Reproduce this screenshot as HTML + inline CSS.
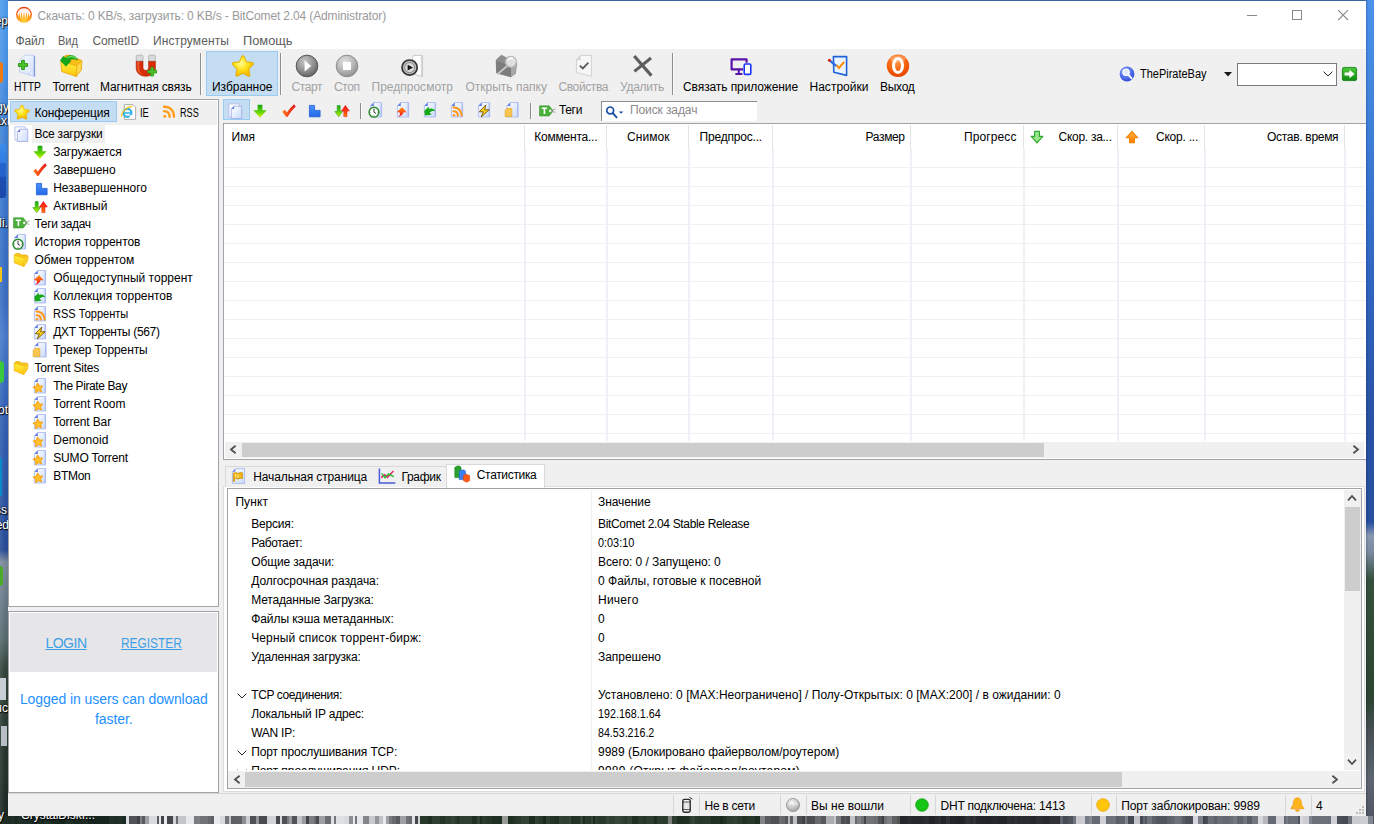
<!DOCTYPE html>
<html lang="ru"><head><meta charset="utf-8"><title>BitComet</title>
<style>
html,body{margin:0;padding:0}
body{width:1374px;height:824px;overflow:hidden;position:relative;background:#2a57a6;font-family:"Liberation Sans",sans-serif;font-size:12px;color:#000}
.a{position:absolute}
#desk-l{left:0;top:0;width:8px;height:824px;background:linear-gradient(90deg,rgba(255,255,255,.10) 0,rgba(0,0,0,0) 60%,rgba(0,0,20,.06) 100%),linear-gradient(180deg,#4e9cee 0,#4a94e6 60px,#4082d4 140px,#3872c8 230px,#3c6ec2 300px,#4a7acb 335px,#3464b8 400px,#2c57a6 480px,#284c96 550px,#7c8a9a 562px,#6a7a8a 600px,#566a6a 640px,#33443a 670px,#2c3c32 720px,#26332c 770px,#1c2824 824px)}
#desk-r{left:1366px;top:0;width:8px;height:824px;background:linear-gradient(90deg,rgba(0,0,30,.18) 0,rgba(0,0,0,0) 30%),linear-gradient(180deg,#4c92ea 0,#4184dc 100px,#3168c4 260px,#2852a4 420px,#26509e 522px,#8a98b0 536px,#7a8aa0 552px,#34503c 580px,#2c4432 700px,#4a5258 735px,#5c6470 780px,#4e5460 824px)}
#desk-b{left:0;top:816px;width:1374px;height:8px;background:linear-gradient(90deg,#22302a 0px,#22302a 4px,#1f2d27 4px,#1f2d27 8px,#1e2c26 8px,#1e2c26 11px,#22302a 11px,#22302a 15px,#1a2822 15px,#1a2822 18px,#22302a 18px,#22302a 21px,#1f2d27 21px,#1f2d27 27px,#202e28 27px,#202e28 31px,#182620 31px,#182620 37px,#1e2c26 37px,#1e2c26 42px,#192721 42px,#192721 44px,#22302a 44px,#22302a 47px,#1f2d27 47px,#1f2d27 51px,#192721 51px,#192721 59px,#16241e 59px,#16241e 65px,#202e28 65px,#202e28 71px,#1e2c26 71px,#1e2c26 74px,#1a2822 74px,#1a2822 82px,#1e2c26 82px,#1e2c26 85px,#1f2d27 85px,#1f2d27 88px,#17251f 88px,#17251f 96px,#17251f 96px,#17251f 104px,#16241e 104px,#16241e 106px,#16241e 106px,#16241e 109px,#212f29 109px,#212f29 113px,#1f2d27 113px,#1f2d27 117px,#202e28 117px,#202e28 123px,#1a2822 123px,#1a2822 126px,#dadde0 126px,#dadde0 129px,#4f5357 129px,#4f5357 137px,#3f4347 137px,#3f4347 140px,#7c8084 140px,#7c8084 142px,#565a5e 142px,#565a5e 145px,#9b9fa3 145px,#9b9fa3 149px,#d8dbde 149px,#d8dbde 157px,#595d61 157px,#595d61 159px,#e5e8eb 159px,#e5e8eb 161px,#404448 161px,#404448 164px,#e6e9ec 164px,#e6e9ec 167px,#43474b 167px,#43474b 173px,#d0d3d6 173px,#d0d3d6 176px,#686c70 176px,#686c70 178px,#c4c7ca 178px,#c4c7ca 186px,#e5e8eb 186px,#e5e8eb 188px,#e6e9ec 188px,#e6e9ec 194px,#787c80 194px,#787c80 197px,#7b7f83 197px,#7b7f83 200px,#6f7377 200px,#6f7377 208px,#65696d 208px,#65696d 211px,#5d6165 211px,#5d6165 214px,#e8ebee 214px,#e8ebee 220px,#d8dbde 220px,#d8dbde 225px,#73777b 225px,#73777b 229px,#c2c5c8 229px,#c2c5c8 231px,#5c6064 231px,#5c6064 236px,#5e6266 236px,#5e6266 242px,#8a8e92 242px,#8a8e92 246px,#cbced1 246px,#cbced1 250px,#4e5256 250px,#4e5256 256px,#919599 256px,#919599 259px,#474b4f 259px,#474b4f 267px,#cdd0d3 267px,#cdd0d3 270px,#d1d4d7 270px,#d1d4d7 276px,#45494d 276px,#45494d 280px,#d7dadd 280px,#d7dadd 282px,#4e5256 282px,#4e5256 287px,#777b7f 287px,#777b7f 289px,#969a9e 289px,#969a9e 292px,#4f5357 292px,#4f5357 297px,#c1c4c7 297px,#c1c4c7 302px,#979b9f 302px,#979b9f 306px,#404448 306px,#404448 309px,#7b7f83 309px,#7b7f83 314px,#666a6e 314px,#666a6e 316px,#474b4f 316px,#474b4f 319px,#9ca0a4 319px,#9ca0a4 323px,#9ca0a4 323px,#9ca0a4 325px,#696d71 325px,#696d71 331px,#dee1e4 331px,#dee1e4 334px,#73777b 334px,#73777b 336px,#dfe2e5 336px,#dfe2e5 344px,#d8dbde 344px,#d8dbde 349px,#8b8f93 349px,#8b8f93 353px,#e8ebee 353px,#e8ebee 355px,#73777b 355px,#73777b 357px,#e5e8eb 357px,#e5e8eb 363px,#83878b 363px,#83878b 367px,#7f8387 367px,#7f8387 369px,#c5c8cb 369px,#c5c8cb 371px,#c7cacd 371px,#c7cacd 375px,#92969a 375px,#92969a 379px,#c0c3c6 379px,#c0c3c6 383px,#e7eaed 383px,#e7eaed 386px,#9ea2a6 386px,#9ea2a6 389px,#767a7e 389px,#767a7e 392px,#676b6f 392px,#676b6f 396px,#575b5f 396px,#575b5f 400px,#9ea2a6 400px,#9ea2a6 406px,#6f7377 406px,#6f7377 409px,#666a6e 409px,#666a6e 412px,#dfe2e5 412px,#dfe2e5 415px,#43474b 415px,#43474b 418px,#d1d4d7 418px,#d1d4d7 420px,#28382a 420px,#28382a 428px,#203022 428px,#203022 432px,#2e3e30 432px,#2e3e30 440px,#243426 440px,#243426 445px,#2d3d2f 445px,#2d3d2f 451px,#344436 451px,#344436 455px,#2d3d2f 455px,#2d3d2f 457px,#223224 457px,#223224 459px,#2e3e30 459px,#2e3e30 464px,#2e3e30 464px,#2e3e30 472px,#203022 472px,#203022 475px,#223224 475px,#223224 477px,#334335 477px,#334335 480px,#1d2d1f 480px,#1d2d1f 482px,#2b3b2d 482px,#2b3b2d 486px,#253527 486px,#253527 492px,#203022 492px,#203022 494px,#1f2f21 494px,#1f2f21 502px,#969b96 502px,#969b96 508px,#1f2f21 508px,#1f2f21 513px,#253527 513px,#253527 516px,#2a3a2c 516px,#2a3a2c 521px,#324234 521px,#324234 526px,#334335 526px,#334335 529px,#1c2c1e 529px,#1c2c1e 535px,#314133 535px,#314133 539px,#28382a 539px,#28382a 543px,#1a2a1c 543px,#1a2a1c 546px,#2e3e30 546px,#2e3e30 550px,#243426 550px,#243426 555px,#203022 555px,#203022 559px,#344436 559px,#344436 561px,#304032 561px,#304032 569px,#364638 569px,#364638 571px,#233325 571px,#233325 575px,#243426 575px,#243426 580px,#354537 580px,#354537 583px,#1c2c1e 583px,#1c2c1e 585px,#2b3b2d 585px,#2b3b2d 587px,#29392b 587px,#29392b 591px,#354537 591px,#354537 593px,#1b2b1d 593px,#1b2b1d 595px,#2f3f31 595px,#2f3f31 598px,#29392b 598px,#29392b 606px,#364638 606px,#364638 609px,#2f3f31 609px,#2f3f31 615px,#364638 615px,#364638 621px,#304032 621px,#304032 625px,#28382a 625px,#28382a 627px,#344436 627px,#344436 632px,#1f2f21 632px,#1f2f21 638px,#2b3b2d 638px,#2b3b2d 643px,#263628 643px,#263628 646px,#2d3d2f 646px,#2d3d2f 654px,#1e2e20 654px,#1e2e20 657px,#2c3c2e 657px,#2c3c2e 662px,#2b3b2d 662px,#2b3b2d 666px,#2d3d2f 666px,#2d3d2f 668px,#7a7f7a 668px,#7a7f7a 672px,#2b3b2d 672px,#2b3b2d 677px,#1d2d1f 677px,#1d2d1f 685px,#1f2f21 685px,#1f2f21 689px,#28382a 689px,#28382a 691px,#334335 691px,#334335 695px,#29392b 695px,#29392b 699px,#273729 699px,#273729 703px,#29392b 703px,#29392b 711px,#203022 711px,#203022 716px,#223224 716px,#223224 720px,#1a2a1c 720px,#1a2a1c 723px,#213123 723px,#213123 725px,#243426 725px,#243426 727px,#2d3d2f 727px,#2d3d2f 733px,#314133 733px,#314133 737px,#2a3a2c 737px,#2a3a2c 742px,#203022 742px,#203022 747px,#273729 747px,#273729 753px,#273729 753px,#273729 755px,#1f2f21 755px,#1f2f21 760px,#818385 760px,#818385 765px,#585a5c 765px,#585a5c 771px,#4e5052 771px,#4e5052 779px,#696b6d 779px,#696b6d 782px,#656769 782px,#656769 785px,#555759 785px,#555759 788px,#b4b5b7 788px,#b4b5b7 790px,#5e6062 790px,#5e6062 793px,#bfc0c2 793px,#bfc0c2 797px,#4d4f51 797px,#4d4f51 802px,#3f4143 802px,#3f4143 805px,#6a6c6e 805px,#6a6c6e 807px,#4b4d4f 807px,#4b4d4f 815px,#686a6c 815px,#686a6c 821px,#555759 821px,#555759 826px,#abacae 826px,#abacae 834px,#c8c9cb 834px,#c8c9cb 836px,#7a7c7e 836px,#7a7c7e 841px,#4b4d4f 841px,#4b4d4f 844px,#515355 844px,#515355 847px,#494b4d 847px,#494b4d 850px,#c2c3c5 850px,#c2c3c5 855px,#66686a 855px,#66686a 857px,#7e8082 857px,#7e8082 861px,#6c6e70 861px,#6c6e70 864px,#424446 864px,#424446 866px,#717375 866px,#717375 874px,#6c6e70 874px,#6c6e70 878px,#525456 878px,#525456 882px,#3e4042 882px,#3e4042 884px,#707274 884px,#707274 887px,#7d7f81 887px,#7d7f81 892px,#5e6062 892px,#5e6062 897px,#515355 897px,#515355 900px,#24262c 900px,#24262c 908px,#2b2d33 908px,#2b2d33 911px,#25272d 911px,#25272d 919px,#25272d 919px,#25272d 923px,#292b31 923px,#292b31 925px,#2b2d33 925px,#2b2d33 929px,#212329 929px,#212329 935px,#292b31 935px,#292b31 938px,#2c2e34 938px,#2c2e34 941px,#22242a 941px,#22242a 946px,#2f3137 946px,#2f3137 950px,#23252b 950px,#23252b 956px,#202228 956px,#202228 964px,#27292f 964px,#27292f 966px,#303238 966px,#303238 969px,#2c2e34 969px,#2c2e34 971px,#282a30 971px,#282a30 973px,#303238 973px,#303238 976px,#23252b 976px,#23252b 980px,#22242a 980px,#22242a 986px,#212329 986px,#212329 991px,#25272d 991px,#25272d 995px,#25272d 995px,#25272d 999px,#212329 999px,#212329 1007px,#2d2f35 1007px,#2d2f35 1011px,#292b31 1011px,#292b31 1014px,#2f3137 1014px,#2f3137 1017px,#292b31 1017px,#292b31 1023px,#292b31 1023px,#292b31 1029px,#27292f 1029px,#27292f 1031px,#25272d 1031px,#25272d 1036px,#2c2e34 1036px,#2c2e34 1040px,#2c2e34 1040px,#2c2e34 1042px,#2a2c32 1042px,#2a2c32 1044px,#27292f 1044px,#27292f 1046px,#282a30 1046px,#282a30 1050px,#303238 1050px,#303238 1058px,#2e3036 1058px,#2e3036 1060px,#60646c 1060px,#60646c 1063px,#474b53 1063px,#474b53 1068px,#50545c 1068px,#50545c 1073px,#6e727a 1073px,#6e727a 1076px,#c7c9cf 1076px,#c7c9cf 1081px,#caccd2 1081px,#caccd2 1085px,#767a82 1085px,#767a82 1089px,#848890 1089px,#848890 1092px,#666a72 1092px,#666a72 1100px,#ced0d6 1100px,#ced0d6 1106px,#686c74 1106px,#686c74 1108px,#6e727a 1108px,#6e727a 1116px,#595d65 1116px,#595d65 1119px,#5f636b 1119px,#5f636b 1125px,#81858d 1125px,#81858d 1128px,#464a52 1128px,#464a52 1134px,#c1c3c9 1134px,#c1c3c9 1140px,#454951 1140px,#454951 1143px,#646870 1143px,#646870 1145px,#555961 1145px,#555961 1147px,#70747c 1147px,#70747c 1152px,#5b5f67 1152px,#5b5f67 1156px,#52565e 1156px,#52565e 1159px,#50545c 1159px,#50545c 1167px,#5c6068 1167px,#5c6068 1171px,#62666e 1171px,#62666e 1175px,#70747c 1175px,#70747c 1179px,#6a6e76 1179px,#6a6e76 1182px,#585c64 1182px,#585c64 1185px,#4d5159 1185px,#4d5159 1189px,#4b4f57 1189px,#4b4f57 1193px,#d4d6dc 1193px,#d4d6dc 1198px,#7c8088 1198px,#7c8088 1203px,#42464e 1203px,#42464e 1206px,#4b4f57 1206px,#4b4f57 1208px,#6a6e76 1208px,#6a6e76 1214px,#5d6169 1214px,#5d6169 1217px,#6a6e76 1217px,#6a6e76 1220px,#6a6e76 1220px,#6a6e76 1223px,#646870 1223px,#646870 1229px,#686c74 1229px,#686c74 1233px,#747880 1233px,#747880 1237px,#60646c 1237px,#60646c 1243px,#6f737b 1243px,#6f737b 1245px,#73777f 1245px,#73777f 1247px,#595d65 1247px,#595d65 1252px,#72767e 1252px,#72767e 1258px,#d5d7dd 1258px,#d5d7dd 1263px,#b5b7bd 1263px,#b5b7bd 1268px,#656971 1268px,#656971 1276px,#d1d3d9 1276px,#d1d3d9 1284px,#666a72 1284px,#666a72 1286px,#777b83 1286px,#777b83 1288px,#686c74 1288px,#686c74 1290px,#6b6f77 1290px,#6b6f77 1298px,#4e525a 1298px,#4e525a 1300px,#d8dae0 1300px,#d8dae0 1303px,#cbcdd3 1303px,#cbcdd3 1309px,#7f838b 1309px,#7f838b 1312px,#6c7078 1312px,#6c7078 1320px,#6d7179 1320px,#6d7179 1328px,#6b6f77 1328px,#6b6f77 1331px,#cfd1d7 1331px,#cfd1d7 1337px,#4a4e56 1337px,#4a4e56 1342px,#464a52 1342px,#464a52 1348px,#6d7179 1348px,#6d7179 1352px,#c8cad0 1352px,#c8cad0 1360px,#cdcfd5 1360px,#cdcfd5 1368px,#848890 1368px,#848890 1373px,#4f535b 1373px,#4f535b 1374px)}
#win{left:8px;top:0;width:1358px;height:816px;background:#f0f0f0;box-sizing:border-box}
#titlebar{left:8px;top:0;width:1358px;height:30px;background:#fff}
#menubar{left:8px;top:30px;width:1358px;height:19px;background:#fff}
.t{position:absolute;transform-origin:0 50%;white-space:nowrap;line-height:16px;font-size:12px;color:#000}
.ttl{color:#999}
.dis{color:#a2a2a2}
.ph{color:#8a8a8a}
.st{}
.lnk{font-size:14px;color:#3d9fe6;text-decoration:underline}
.lg{font-size:14px;color:#1e90ff}
.vsep{position:absolute;width:1px;background:#8e8e8e;box-shadow:1px 0 0 #fbfbfb}
.ssep{position:absolute;width:1px;background:#d7d7d7;top:795px;height:20px}
.hl{position:absolute;height:1px;background:#f0f0f0;left:225px;width:1140px}
.cl{position:absolute;width:2px;background:#edf1f7;top:148px;height:293px}
.hs{position:absolute;width:1px;background:#e5e5e5;top:125px;height:24px}
svg{position:absolute;overflow:visible}
.ov{z-index:3}
.dt{position:absolute;white-space:nowrap;font-size:12px;line-height:16px;color:#fff;text-shadow:1px 1px 1px #000,0 0 2px #000}
.mn{color:#5c5c5c}

</style></head>
<body>
<div class="a" id="desk-l"></div><div class="a" id="desk-r"></div><div class="a" id="desk-b"></div>
<!-- desktop fragments (left strip) -->
<div class="a" style="left:0;top:62px;width:3px;height:21px;background:#f07a12;border-radius:0 3px 3px 0"></div>
<div class="a" style="left:0;top:144px;width:6px;height:54px;border-radius:0 3px 3px 0;background:linear-gradient(180deg,#3a8cea 0,#2f7be0 35%,#2462cc 36%,#2462cc 60%,#1c4fb4 61%,#1a48a8 100%)"></div>
<div class="a" style="left:0;top:267px;width:2px;height:15px;background:#f5c21a"></div>
<div class="a" style="left:0;top:361px;width:4px;height:22px;background:#3cc83c;border-radius:0 4px 4px 0"></div>
<div class="a" style="left:0;top:458px;width:2px;height:38px;background:#0a8ac8"></div>
<div class="a" style="left:0;top:566px;width:3px;height:20px;background:#4caa2a;border-radius:0 3px 3px 0"></div>
<div class="a" style="left:0;top:678px;width:6px;height:22px;background:#c9ced6"></div>
<div class="a" style="left:1px;top:726px;width:6px;height:20px;background:#b9bec6"></div>
<span class="dt" style="right:1366px;top:13px">Сер</span>
<span class="dt" style="right:1365px;top:99px">Energy</span>
<span class="dt" style="right:1367px;top:113px">Max</span>
<span class="dt" style="right:1366px;top:215px">Defrag li.</span>
<span class="dt" style="right:1366px;top:402px">Root</span>
<span class="dt" style="right:1367px;top:502px">Progress</span>
<span class="dt" style="right:1365px;top:517px">Updated</span>
<span class="dt" style="right:1366px;top:700px">Speccuc</span>
<span class="dt" style="left:-2px;top:807px">y</span>
<span class="dt" style="left:21px;top:807px">CrystalDiskI...</span>
<div class="a" id="win"></div>
<div class="a" id="titlebar"></div>
<div class="a" style="left:8px;top:0;width:1358px;height:1px;background:#3b62a0"></div>
<div class="a" id="menubar"></div>
<!-- toolbar -->
<div class="a" id="fav" style="left:206px;top:51px;width:70px;height:43px;background:#c4ddf3;border:1px solid #99ccf5"></div>
<div class="vsep" style="left:200px;top:53px;height:42px"></div>
<div class="vsep" style="left:280px;top:53px;height:42px"></div>
<div class="vsep" style="left:672px;top:53px;height:42px"></div>
<div class="a" id="combo" style="left:1237px;top:63px;width:98px;height:21px;background:#fff;border:1px solid #7a7a7a"></div>
<!-- left panel frame -->
<div class="a" style="left:8px;top:99px;width:209px;height:506px;background:#fff;border:1px solid #a0a3a8;border-left-color:#f4f4f4"></div>
<div class="a" style="left:10px;top:101px;width:207px;height:24px;background:#f0f0f0"></div>
<div class="a" style="left:10px;top:101px;width:105px;height:19px;background:#c4ddf3;border:1px solid #99ccf5"></div>
<div class="a" style="left:32px;top:125px;width:73px;height:18px;background:#efefef"></div>
<!-- login panel -->
<div class="a" id="login" style="left:8px;top:611px;width:209px;height:180px;background:#fff;border:1px solid #a0a3a8;border-left-color:#f4f4f4"></div>
<div class="a" style="left:10px;top:613px;width:207px;height:59px;background:#e6e6e9"></div>
<div class="a" style="left:8px;top:125px;width:1px;height:482px;background:#a0a3a8"></div>
<div class="a" style="left:8px;top:611px;width:1px;height:182px;background:#a0a3a8"></div>
<!-- list toolbar -->
<div class="a" style="left:223px;top:99px;width:25px;height:19px;background:#c4ddf3;border:1px solid #99ccf5"></div>
<div class="vsep" style="left:360px;top:103px;height:16px;background:#8a8a8a"></div>
<div class="vsep" style="left:530px;top:103px;height:16px;background:#8a8a8a"></div>
<div class="a" id="search" style="left:601px;top:101px;width:155px;height:19px;background:#fff;border-top:1px solid #8c8c8c;border-left:1px solid #8c8c8c"></div>
<!-- task list -->
<div class="a" id="list" style="left:223px;top:123px;width:1142px;height:335px;background:#fff;border:1px solid #a0a3a8;border-right:none"></div>
<div class="hl" style="top:167px"></div><div class="hl" style="top:186px"></div><div class="hl" style="top:205px"></div><div class="hl" style="top:224px"></div><div class="hl" style="top:243px"></div><div class="hl" style="top:262px"></div><div class="hl" style="top:281px"></div><div class="hl" style="top:300px"></div><div class="hl" style="top:319px"></div><div class="hl" style="top:338px"></div><div class="hl" style="top:357px"></div><div class="hl" style="top:376px"></div><div class="hl" style="top:395px"></div><div class="hl" style="top:414px"></div><div class="hl" style="top:433px"></div><div class="cl" style="left:524px"></div><div class="cl" style="left:606px"></div><div class="cl" style="left:688px"></div><div class="cl" style="left:772px"></div><div class="cl" style="left:910px"></div><div class="cl" style="left:1023px"></div><div class="cl" style="left:1117px"></div><div class="cl" style="left:1204px"></div><div class="cl" style="left:1344px"></div><div class="hs" style="left:524px"></div><div class="hs" style="left:606px"></div><div class="hs" style="left:688px"></div><div class="hs" style="left:772px"></div><div class="hs" style="left:910px"></div><div class="hs" style="left:1023px"></div><div class="hs" style="left:1117px"></div><div class="hs" style="left:1204px"></div><div class="hs" style="left:1344px"></div>
<!-- list hscroll -->
<div class="a" style="left:225px;top:442px;width:1139px;height:16px;background:#f0f0f0"></div>
<div class="a" style="left:242px;top:443px;width:802px;height:14px;background:#cdcdcd"></div>
<!-- bottom tab container -->
<div class="a" style="left:223px;top:486px;width:1140px;height:304px;background:#fff;border:1px solid #dcdcdc"></div>
<div class="a" style="left:225px;top:466px;width:147px;height:20px;background:#f0f0f0;border:1px solid #d9d9d9;border-bottom:none"></div>
<div class="a" style="left:373px;top:466px;width:73px;height:20px;background:#f0f0f0;border:1px solid #d9d9d9;border-bottom:none;border-left:none"></div>
<div class="a" style="left:446px;top:464px;width:97px;height:23px;background:#fff;border:1px solid #d9d9d9;border-bottom:none"></div>
<!-- stats panel -->
<div class="a" id="stats" style="left:227px;top:488px;width:1133px;height:299px;background:#fff;border:1px solid #a0a3a8"></div>
<div class="a" style="left:591px;top:490px;width:1px;height:281px;background:#f0f0f0"></div>
<!-- stats scrollbars -->
<div class="a ov" style="left:1344px;top:490px;width:17px;height:280px;background:#f0f0f0"></div>
<div class="a ov" style="left:1345px;top:507px;width:15px;height:84px;background:#cdcdcd"></div>
<div class="a ov" style="left:228px;top:770px;width:1116px;height:1px;background:#fff"></div>
<div class="a ov" style="left:228px;top:771px;width:1133px;height:17px;background:#f0f0f0"></div>
<div class="a ov" style="left:245px;top:772px;width:877px;height:15px;background:#cdcdcd"></div>
<!-- status bar -->
<div class="a" style="left:8px;top:793px;width:1358px;height:1px;background:#d7d7d7"></div>
<div class="ssep" style="left:673px"></div><div class="ssep" style="left:699px"></div><div class="ssep" style="left:780px"></div><div class="ssep" style="left:806px"></div><div class="ssep" style="left:910px"></div><div class="ssep" style="left:935px"></div><div class="ssep" style="left:1091px"></div><div class="ssep" style="left:1116px"></div><div class="ssep" style="left:1285px"></div><div class="ssep" style="left:1311px"></div>
<svg width="0" height="0" style="left:0;top:0">
<defs>
<linearGradient id="gDoc" x1="0" y1="0" x2="1" y2="1"><stop offset="0" stop-color="#ffffff"/><stop offset="1" stop-color="#c9dafc"/></linearGradient>
<linearGradient id="gGrn" x1="0" y1="0" x2="0" y2="1"><stop offset="0" stop-color="#16a516"/><stop offset=".55" stop-color="#5fd400"/><stop offset="1" stop-color="#d4f500"/></linearGradient>
<linearGradient id="gRed" x1="0" y1="1" x2="0" y2="0"><stop offset="0" stop-color="#ff8a00"/><stop offset=".5" stop-color="#ff3a10"/><stop offset="1" stop-color="#f01010"/></linearGradient>
<linearGradient id="gChk" x1="0" y1="0" x2="1" y2="0"><stop offset="0" stop-color="#ff7a1a"/><stop offset="1" stop-color="#e8101a"/></linearGradient>
<linearGradient id="gYel" x1="0" y1="0" x2="0" y2="1"><stop offset="0" stop-color="#fff45a"/><stop offset="1" stop-color="#ffc400"/></linearGradient>
<linearGradient id="gBlu" x1="0" y1="0" x2="0" y2="1"><stop offset="0" stop-color="#4a93ff"/><stop offset="1" stop-color="#2368e8"/></linearGradient>
<radialGradient id="gStar" cx=".4" cy=".35" r=".7"><stop offset="0" stop-color="#fffb9a"/><stop offset=".5" stop-color="#ffe31a"/><stop offset="1" stop-color="#f5b800"/></radialGradient>
<radialGradient id="gPlay" cx=".4" cy=".3" r=".75"><stop offset="0" stop-color="#c9c9c9"/><stop offset=".6" stop-color="#8c8c8c"/><stop offset="1" stop-color="#5e5e5e"/></radialGradient>
<radialGradient id="gStop" cx=".4" cy=".3" r=".75"><stop offset="0" stop-color="#e2e2e2"/><stop offset=".6" stop-color="#b4b4b4"/><stop offset="1" stop-color="#8a8a8a"/></radialGradient>
<radialGradient id="gExit" cx=".45" cy=".3" r=".8"><stop offset="0" stop-color="#ff9a4a"/><stop offset=".6" stop-color="#f55a05"/><stop offset="1" stop-color="#d83c00"/></radialGradient>
<radialGradient id="gApp" cx=".5" cy=".85" r=".9"><stop offset="0" stop-color="#ffd23a"/><stop offset=".45" stop-color="#ff9a10"/><stop offset=".8" stop-color="#f0501a"/><stop offset="1" stop-color="#e03a1a"/></radialGradient>
<radialGradient id="gGlobe" cx=".4" cy=".35" r=".7"><stop offset="0" stop-color="#8aa8ff"/><stop offset="1" stop-color="#2a48d8"/></radialGradient>
<radialGradient id="gBall" cx=".4" cy=".3" r=".8"><stop offset="0" stop-color="#f4f4f4"/><stop offset="1" stop-color="#9a9a9a"/></radialGradient>
<linearGradient id="gFold" x1="0" y1="0" x2="0" y2="1"><stop offset="0" stop-color="#fff23a"/><stop offset="1" stop-color="#ffc20e"/></linearGradient>
<linearGradient id="gOar" x1="0" y1="0" x2="0" y2="1"><stop offset="0" stop-color="#ff9a1a"/><stop offset=".55" stop-color="#ff4a10"/><stop offset="1" stop-color="#e8101a"/></linearGradient>
<linearGradient id="gOr" x1="0" y1="0" x2="0" y2="1"><stop offset="0" stop-color="#ffb340"/><stop offset="1" stop-color="#ff7a00"/></linearGradient>
<linearGradient id="gGoBtn" x1="0" y1="0" x2="0" y2="1"><stop offset="0" stop-color="#4fc83a"/><stop offset="1" stop-color="#0e8a0e"/></linearGradient>
<!-- 16x16 symbols -->
<symbol id="sdoc" viewBox="0 0 16 16"><path d="M5.700 .5H13.600V15H2.400V3.700Z" fill="url(#gDoc)" stroke="#aebcf0" stroke-width=".9"/><path d="M5.800 .6V3.900H2.500Z" fill="#5f7ae2"/><path d="M13.100 1V14.600" stroke="#9cb0ea" stroke-width=".7"/></symbol>
<symbol id="docs" viewBox="0 0 16 16"><path d="M.9 .9H11.400V14H.9Z" fill="#fcfcff" stroke="#b4bce6" stroke-width=".9"/><path d="M6 3.200H13.700V15.500H3.300V5.800Z" fill="url(#gDoc)" stroke="#a3b0ea" stroke-width=".9"/><path d="M6.100 3.300V6H3.400Z" fill="#6379e2"/></symbol>
<symbol id="dn" viewBox="0 0 16 16"><path d="M5.600 1.700H10.400V7.200H14.600L8 14.800L1.400 7.200H5.600Z" fill="url(#gGrn)"/></symbol>
<symbol id="chk" viewBox="0 0 16 16"><path d="M1.300 8.700L3.900 6.700L5.900 9.500C8 6.300 10.500 3.400 13.300 1.200L14.700 3.700C11.500 6.700 8.700 10.100 6.500 14L5 13.800Z" fill="url(#gChk)"/></symbol>
<symbol id="lsh" viewBox="0 0 16 16"><path d="M2.400 2.400H7.600V7.400H13.100V13.800H2.400Z" fill="url(#gBlu)" stroke="#1f5cd6" stroke-width=".8"/></symbol>
<symbol id="updn" viewBox="0 0 16 16"><path d="M3.2 2.6H6.2V8.4H8.6L4.7 13.8L.8 8.4H3.2Z" fill="url(#gGrn)" stroke="#1a9a1a" stroke-width=".5"/><path d="M9.8 13.6H13V8H15.4L11.4 2.4L7.4 8H9.8Z" fill="url(#gRed)" stroke="#e01010" stroke-width=".5"/></symbol>
<symbol id="clk" viewBox="0 0 16 16"><use href="#sdoc"/><circle cx="6" cy="10.200" r="4.900" fill="#fff" stroke="#2c8a2c" stroke-width="1.500"/><path d="M6 7V10.200L8.200 11.600" stroke="#222" stroke-width=".9" fill="none"/><path d="M6 6.400V7.200M6 13.200V14M2.200 10.200H3M9 10.200H9.800" stroke="#666" stroke-width=".7"/></symbol>
<symbol id="oar" viewBox="0 0 16 16"><use href="#sdoc"/><path d="M7.100 5L11.700 10.500L8.700 10C8.300 12.100 6.600 13.900 3.500 14.900C4.800 13.300 5.200 11.900 5 10.700L1.900 9.900Z" fill="url(#gOar)"/></symbol>
<symbol id="gar" viewBox="0 0 16 16"><use href="#sdoc"/><path d="M2.2 9L6.6 4.4L6.8 7C10 6 12 6.8 13.4 9.4C11 8.6 9 9.2 7.6 10.6L9.6 12.8L3 13.6Z" fill="#18a818"/></symbol>
<symbol id="rsd" viewBox="0 0 16 16"><use href="#sdoc"/><g fill="none" stroke="#ff9a1c" stroke-width="2.1" stroke-linecap="round"><path d="M4.4 5.4C9.4 5.4 12.6 8.8 12.6 13.6"/><path d="M4.4 9.2C7 9.2 8.8 11 8.8 13.6"/></g><circle cx="5" cy="13.2" r="1.3" fill="#ff9a1c"/></symbol>
<symbol id="bolt" viewBox="0 0 16 16"><use href="#sdoc"/><path d="M9.8 3L3.2 9.8H7.4L5.2 15L13.2 7.8H8.6Z" fill="#ffd61a" stroke="#7a5200" stroke-width=".9" stroke-linejoin="round"/></symbol>
<symbol id="trk" viewBox="0 0 16 16"><use href="#sdoc" x="1.500" y="0" width="16" height="16"/><path d="M4.200 6.400H8.800V14.600H2.200V8.200Z" fill="#f8c64e" stroke="#e9a92a" stroke-width=".8"/></symbol>
<symbol id="std" viewBox="0 0 16 16"><use href="#sdoc"/><path d="M5.50 5.14L7.32 7.92L10.64 8.00L8.55 10.58L9.50 13.76L6.40 12.58L3.67 14.47L3.83 11.15L1.19 9.14L4.40 8.27Z" fill="#ffc22a" stroke="#f7a51a" stroke-width="1.100" stroke-linejoin="round"/></symbol>
<symbol id="fld" viewBox="0 0 16 16"><path d="M1.200 2.600L2.800 .5H6.600L8.600 2H13.800L15.200 4L14.400 8.500L11 13.400Z" fill="#f6c31c" stroke="#e6ae0c" stroke-width=".7" stroke-linejoin="round"/><path d="M1.200 2.300L11.500 5.100L10.600 13.600L1.200 9.700Z" fill="url(#gFold)" stroke="#efb810" stroke-width=".7" stroke-linejoin="round"/><path d="M11.500 5.100L15.100 4.100L14.400 8.600L10.700 13.500Z" fill="#f9cf2c"/></symbol>
<symbol id="tag" viewBox="0 0 18 16"><path d="M.5 2.800H10.200L14.200 7.900L10.200 13H.5Z" fill="#4caf3c" stroke="#3c9a30" stroke-width=".6"/><path d="M2.700 5.200H8.100M5.400 5.200V11" stroke="#fff" stroke-width="1.600"/><circle cx="11.300" cy="7.900" r="1.300" fill="#e4f4e0"/><path d="M12 7.700L16.600 5.800M12 8.200L16.600 9.400" stroke="#9a9a9a" stroke-width=".8"/></symbol>
<symbol id="star16" viewBox="0 0 16 16"><path d="M8 2L9.900 6.200L14.300 6.700L11 9.800L11.900 14.200L8 12L4.100 14.200L5 9.800L1.700 6.700L6.100 6.200Z" fill="#e9b400" stroke="#e9b400" stroke-width="2.600" stroke-linejoin="round"/><path d="M8 2L9.900 6.200L14.300 6.700L11 9.800L11.900 14.200L8 12L4.100 14.200L5 9.800L1.700 6.700L6.100 6.200Z" fill="url(#gStar)" stroke="url(#gStar)" stroke-width="1.200" stroke-linejoin="round"/></symbol>
<symbol id="rss16" viewBox="0 0 16 16"><g fill="none" stroke="#ff9f1c" stroke-width="2.6" stroke-linecap="round"><path d="M3.2 3C10 3 13.8 7.4 13.8 13.6"/><path d="M3.2 7.6C7.2 7.6 9.2 10 9.2 13.6"/></g><circle cx="4" cy="13" r="1.6" fill="#ff9f1c"/></symbol>
<symbol id="chev" viewBox="0 0 10 6"><path d="M.6 .6L5 5L9.4 .6" fill="none" stroke="#222" stroke-width="1"/></symbol>
</defs></svg>

<!-- app icon -->
<svg style="left:15px;top:6px" width="18" height="18" viewBox="0 0 18 18"><circle cx="9" cy="8.800" r="8" fill="url(#gApp)"/><path d="M2.400 8.400C2.600 5 5 2.200 9 2.200C13 2.200 15.400 5 15.600 8.400L14.600 11L13.600 6.600L12.600 12.400L11.400 6L10.200 13.400L9 5.800L7.800 13.400L6.600 6L5.400 12.400L4.400 6.600L3.400 11Z" fill="#fff" opacity=".93"/></svg>
<!-- window controls -->
<svg style="left:1246px;top:9px" width="104" height="12" viewBox="0 0 104 12"><path d="M1 6.500H11" stroke="#8a8a8a" stroke-width="1"/><rect x="46.500" y="1.500" width="9" height="9" fill="none" stroke="#8a8a8a"/><path d="M92.200 1.200L102 11M102 1.200L92.200 11" stroke="#8a8a8a" stroke-width="1.100"/></svg>

<!-- HTTP -->
<svg style="left:14px;top:53px" width="24" height="24" viewBox="0 0 24 24"><path d="M10.400 2.200H19.800L20.900 3.400V23.600L5.600 18.900V7.400Z" fill="url(#gDoc)" stroke="#b4c2ee" stroke-width=".7"/><path d="M19.800 2.200L20.900 3.400V23.600L19.800 23.200Z" fill="#7d92d8"/><path d="M10.400 2.300L10 7.200L5.700 7.400Z" fill="#f4f7fe" stroke="#c3cef2" stroke-width=".5"/><circle cx="15" cy="17.500" r=".8" fill="#fff"/><circle cx="17.800" cy="20.400" r=".9" fill="#fff"/><circle cx="12" cy="19" r=".6" fill="#fff"/><path d="M7.600 7.400H10.400V10.600H13.600V13.400H10.400V16.600H7.600V13.400H4.400V10.600H7.600Z" fill="#4cc22c" stroke="#2a9a14" stroke-width="1" stroke-linejoin="round"/></svg>
<!-- Torrent -->
<svg style="left:59px;top:53px" width="24" height="24" viewBox="0 0 24 24"><path d="M2.700 8L6 2.700L10 2.100L12.600 3.600L22.600 7.400L22.400 16.600L17.200 23.400Z" fill="#fbbf1c" stroke="#e89e06" stroke-width=".8" stroke-linejoin="round"/><path d="M1.800 8.500L17.800 12.700L17.200 23.500L2.700 18.600Z" fill="url(#gFold)" stroke="#eaa606" stroke-width=".8" stroke-linejoin="round"/><path d="M17.800 12.700L22.900 7.900L22.400 16.600L17.200 23.400Z" fill="#ffd84a" stroke="#eaa606" stroke-width=".6" stroke-linejoin="round"/><path d="M1.300 7.500L6.900 13.300L12.200 7.700L9.900 7C11.800 5.700 15.200 5.500 18.500 7C17.500 3.500 13.600 1.700 9.600 3C8.300 3.400 7.200 4 6.400 5L4.400 3.300Z" fill="#16a81c" stroke="#0e8a14" stroke-width=".5" stroke-linejoin="round"/><path d="M8.200 4.800C10.800 3 14.600 3.200 16.800 5.400" stroke="#6fe060" stroke-width="1.100" fill="none" stroke-linecap="round"/></svg>
<!-- Magnet -->
<svg style="left:134px;top:53px" width="24" height="24" viewBox="0 0 24 24"><path d="M2.200 8H9V14.600C9 18.400 14.600 18.400 14.600 14.600V8H21.400V15C21.400 26 2.200 26 2.200 15Z" fill="#d82c08" stroke="#a81c00" stroke-width=".6"/><path d="M3.400 8.400H5.200V15.600C5.200 19 7 21 9.400 21.800C5.400 21.400 3.400 18.800 3.400 15Z" fill="#f06a3a" opacity=".8"/><rect x="2.200" y="2.200" width="6.800" height="5.800" rx="1.200" fill="#d9d9d9" stroke="#9a9a9a" stroke-width=".6"/><rect x="14.600" y="2.200" width="6.800" height="5.800" rx="1.200" fill="#d9d9d9" stroke="#9a9a9a" stroke-width=".6"/><path d="M16.800 14.400H19.600V17.200H22.600V20H19.600V23H16.800V20H13.800V17.200H16.800Z" fill="#4cc22c" stroke="#2a9a14" stroke-width=".8" stroke-linejoin="round"/></svg>
<!-- Star big -->
<svg style="left:231px;top:54px" width="24" height="24" viewBox="0 0 24 24"><path d="M11.900 3L14.600 9L21.200 9.800L16.400 14.400L17.700 21L11.900 17.800L6.100 21L7.400 14.400L2.600 9.800L9.200 9Z" fill="#e4ad00" stroke="#e4ad00" stroke-width="3.400" stroke-linejoin="round"/><path d="M11.900 3L14.600 9L21.200 9.800L16.400 14.400L17.700 21L11.900 17.800L6.100 21L7.400 14.400L2.600 9.800L9.200 9Z" fill="url(#gStar)" stroke="url(#gStar)" stroke-width="1.600" stroke-linejoin="round"/></svg>
<!-- Start -->
<svg style="left:295px;top:54px" width="24" height="24" viewBox="0 0 24 24"><circle cx="12" cy="12" r="10.800" fill="url(#gPlay)" stroke="#555" stroke-width="1"/><path d="M9.600 6.600L16.200 12L9.600 17.400Z" fill="#fff"/></svg>
<!-- Stop -->
<svg style="left:335px;top:54px" width="24" height="24" viewBox="0 0 24 24"><circle cx="12" cy="12" r="10.800" fill="url(#gStop)" stroke="#8e8e8e" stroke-width="1"/><rect x="8" y="8" width="8" height="8" fill="#fff"/></svg>
<!-- Preview -->
<svg style="left:400px;top:54px" width="24" height="24" viewBox="0 0 24 24"><path d="M13.400 1.400H22.600V22.800L12.600 19.600V3.400Z" fill="#fff" stroke="#bdbdbd" stroke-width=".8"/><path d="M21.400 2V22" stroke="#d8d8d8" stroke-width="1.200"/><circle cx="9.600" cy="13.600" r="7.600" fill="#bdbdbd" stroke="#333" stroke-width="1.700"/><circle cx="9.600" cy="13.600" r="5" fill="#dcdcdc" stroke="#7a7a7a" stroke-width=".9"/><path d="M7.600 10.800L13 13.600L7.600 16.400Z" fill="#111"/></svg>
<!-- Open folder -->
<svg style="left:495px;top:54px" width="24" height="24" viewBox="0 0 24 24"><path d="M1.200 6L6.400 1.200L10.600 3.400L21.600 9L20.400 19.600L15.800 22.800L1.600 19Z" fill="#8e8e8e" stroke="#747474" stroke-width=".7" stroke-linejoin="round"/><path d="M1.200 7L6.600 8.400L16 13V22.800L1.600 19Z" fill="#7c7c7c"/><path d="M16 13L21.600 9.200L20.400 19.600L16 22.800Z" fill="#a8a8a8"/><path d="M12.400 11.800L3 19.800" stroke="#c4c4c4" stroke-width="2" stroke-linecap="round"/><circle cx="16" cy="7.800" r="5.400" fill="#e6e6e6" fill-opacity=".92" stroke="#b9b9b9" stroke-width="1.300"/><path d="M12.800 6.400C13.600 4.400 15.600 3.600 17.400 4" stroke="#fff" stroke-width="1.200" fill="none" stroke-linecap="round"/></svg>
<!-- Properties -->
<svg style="left:572px;top:54px" width="24" height="24" viewBox="0 0 24 24"><path d="M8.400 1.400H19.400V22.400L4.400 18.400V6Z" fill="#f7f7f7" stroke="#c8c8c8" stroke-width=".8"/><path d="M8.400 1.500L8.200 5.800L4.500 6Z" fill="#e0e0e0" stroke="#c0c0c0" stroke-width=".5"/><path d="M7.800 11.600L10.800 14.400L16.400 8.600" fill="none" stroke="#5a5a5a" stroke-width="1.800"/></svg>
<!-- Delete -->
<svg style="left:631px;top:54px" width="24" height="24" viewBox="0 0 24 24"><path d="M3.200 2L20.400 21.600" stroke="#5e5e5e" stroke-width="3.200"/><path d="M20 4L3.400 17.400" stroke="#5e5e5e" stroke-width="3"/></svg>
<!-- Link app -->
<svg style="left:729px;top:54px" width="24" height="24" viewBox="0 0 24 24"><path d="M14 15.400H2.600V5.400H17.600V8.800" fill="none" stroke="#5a12a8" stroke-width="2.200" stroke-linejoin="round"/><path d="M9.800 16V19.600M6.400 20H13.400" stroke="#5a12a8" stroke-width="2"/><rect x="15.200" y="10" width="6.600" height="10.400" rx="1.200" fill="#fff" stroke="#1a34ff" stroke-width="1.600"/></svg>
<!-- Settings -->
<svg style="left:826px;top:54px" width="24" height="24" viewBox="0 0 24 24"><path d="M7.400 2.600H20.600V21.400L7.800 18.200Z" fill="#eaf3ff" stroke="#1f62d6" stroke-width="1.600" stroke-linejoin="round"/><path d="M10.400 11L13 14L18.200 7.800" fill="none" stroke="#ff8a00" stroke-width="2"/><path d="M3.600 6.400L10.200 11.800" stroke="#2a6ae0" stroke-width="2.200"/><circle cx="3.400" cy="6.200" r="1.500" fill="#e8201a"/></svg>
<!-- Exit -->
<svg style="left:886px;top:54px" width="24" height="24" viewBox="0 0 24 24"><circle cx="12" cy="11.800" r="11.200" fill="url(#gExit)"/><ellipse cx="12" cy="11.600" rx="4.500" ry="7" fill="none" stroke="#fff" stroke-width="3"/><ellipse cx="12" cy="5" rx="7.600" ry="3.400" fill="#fff" opacity=".25"/></svg>
<!-- Globe/search -->
<svg style="left:1119px;top:66px" width="16" height="16" viewBox="0 0 16 16"><circle cx="8" cy="8" r="7.400" fill="url(#gGlobe)"/><circle cx="7" cy="6.200" r="3.200" fill="#dfe8ff" stroke="#fff" stroke-width="1.200"/><path d="M9.200 8.600L12.600 12.400" stroke="#fff" stroke-width="2" stroke-linecap="round"/></svg>
<svg style="left:1224px;top:72px" width="8" height="5" viewBox="0 0 8 5"><path d="M0 0H8L4 4.400Z" fill="#1a1a1a"/></svg>
<svg style="left:1323px;top:71px" width="10" height="6" viewBox="0 0 10 6"><use href="#chev" width="10" height="6"/></svg>
<svg style="left:1342px;top:67px" width="15" height="14" viewBox="0 0 15 14"><rect x=".4" y=".4" width="14.200" height="13.200" rx="1.600" fill="url(#gGoBtn)" stroke="#0c7a0c" stroke-width=".8"/><path d="M2.600 5.600H7.400V2.800L12.600 7L7.400 11.200V8.400H2.600Z" fill="#fff"/></svg>

<!-- left tabs icons -->
<svg style="left:14px;top:104px" width="16" height="16"><use href="#star16" width="16" height="16"/></svg>
<svg style="left:121px;top:104px" width="16" height="16" viewBox="0 0 16 16"><path d="M3.400 .6H12L14.600 3.200V15.400H3.400Z" fill="#fff" stroke="#a6a6a6" stroke-width=".9"/><circle cx="6.400" cy="8.800" r="4" fill="none" stroke="#35b4ee" stroke-width="2.200"/><path d="M3 9H10.200" stroke="#35b4ee" stroke-width="1.600"/><path d="M8.600 11.200H11.400V13H8.600Z" fill="#fff"/><path d="M.6 12.600C.2 8 5.600 2.600 11.400 2.400" fill="none" stroke="#ffc81a" stroke-width="1.100"/></svg>
<svg style="left:161px;top:104px" width="15" height="15"><use href="#rss16" width="15" height="15"/></svg>

<!-- list toolbar icons -->
<svg style="left:227.600px;top:102.500px" width="16" height="16"><use href="#docs" width="16" height="16"/></svg>
<svg style="left:252.200px;top:102.500px" width="16" height="16"><use href="#dn" width="16" height="16"/></svg>
<svg style="left:280.500px;top:102.500px" width="16" height="16"><use href="#chk" width="16" height="16"/></svg>
<svg style="left:306.500px;top:103px" width="16" height="16"><use href="#lsh" width="16" height="16"/></svg>
<svg style="left:333.500px;top:102.500px" width="16" height="16"><use href="#updn" width="16" height="16"/></svg>
<svg style="left:368.400px;top:102px" width="16" height="16"><use href="#clk" width="16" height="16"/></svg>
<svg style="left:395px;top:102px" width="16" height="16"><use href="#oar" width="16" height="16"/></svg>
<svg style="left:422px;top:102px" width="16" height="16"><use href="#gar" width="16" height="16"/></svg>
<svg style="left:449px;top:102px" width="16" height="16"><use href="#rsd" width="16" height="16"/></svg>
<svg style="left:476px;top:102px" width="16" height="16"><use href="#bolt" width="16" height="16"/></svg>
<svg style="left:503px;top:102px" width="18" height="16"><use href="#trk" width="16" height="16"/></svg>
<svg style="left:538.500px;top:103px" width="18" height="16"><use href="#tag" width="18" height="16"/></svg>
<svg style="left:605px;top:105px" width="20" height="14" viewBox="0 0 20 14"><circle cx="5.200" cy="5.400" r="3.400" fill="#fff" stroke="#1c4fa6" stroke-width="1.700"/><path d="M7.600 8L11.600 12.400" stroke="#1c4fa6" stroke-width="1.900" stroke-linecap="round"/><path d="M13.800 6.400H18.400L16.100 8.800Z" fill="#1c4fa6"/></svg>
<!-- header arrows -->
<svg style="left:1030px;top:130px" width="14" height="14" viewBox="0 0 14 14"><path d="M4.600 1.400H9.400V6.400H12.800L7 12.800L1.200 6.400H4.600Z" fill="#9be58a" stroke="#2fa82f" stroke-width="1.200" stroke-linejoin="round"/></svg>
<svg style="left:1125px;top:130px" width="14" height="14" viewBox="0 0 14 14"><path d="M4.600 12.800H9.400V7.800H12.800L7 1.400L1.200 7.800H4.600Z" fill="url(#gOr)" stroke="#f08200" stroke-width="1.100" stroke-linejoin="round"/></svg>
<!-- list hscroll arrows -->
<svg style="left:229px;top:445px" width="8" height="9" viewBox="0 0 8 9"><path d="M6.600 .8L2 4.500L6.600 8.200" fill="none" stroke="#505050" stroke-width="1.800"/></svg>
<svg style="left:1352px;top:445px" width="8" height="9" viewBox="0 0 8 9"><path d="M1.400 .8L6 4.500L1.400 8.200" fill="none" stroke="#505050" stroke-width="1.800"/></svg>
<!-- bottom tab icons -->
<svg style="left:231px;top:468px" width="16" height="16" viewBox="0 0 16 16"><path d="M4.400 .6H13.600V15.400H1.400V3.600Z" fill="url(#gDoc)" stroke="#a9b9ec" stroke-width=".9"/><path d="M4.400 .7V3.800H1.500Z" fill="#6f83e4"/><path d="M2.400 5.200C4.400 3.800 6.400 5.800 8.200 5C9.400 4.400 10.400 4.400 11.400 4.800V10.600C10.200 10 9 10.200 8 10.800C6.200 11.600 4.600 9.800 3.600 10.400V13.400H2.400Z" fill="#f2b81a" stroke="#c88a00" stroke-width=".8"/><path d="M4.600 6V9.200M7 6.400V9.800" stroke="#fff1a8" stroke-width=".9"/></svg>
<svg style="left:378px;top:468px" width="18" height="16" viewBox="0 0 18 16"><path d="M1.400 .4V15H17.400" fill="none" stroke="#4a5ad8" stroke-width="1.500"/><path d="M3.200 9.600L6.600 6.800L9.400 9.400L15.400 3" fill="none" stroke="#e8206a" stroke-width="1.500"/><path d="M3.600 5.400L7 9.600L10.600 6L15.800 8.600" fill="none" stroke="#2cb82c" stroke-width="1.500"/></svg>
<svg style="left:454px;top:465px" width="17" height="18" viewBox="0 0 17 18"><path d="M.8 2.400L3 1H5.800L7 2.400V12.600H.8Z" fill="#2ca02c" stroke="#1c801c" stroke-width=".6"/><path d="M5.200 6.400L7.400 5H10.400L11.600 6.400V14.400H5.200Z" fill="#3a82f0" stroke="#1c5ccc" stroke-width=".6"/><path d="M9.400 10.600L12 9.200L15.600 10.600V15.600L12.800 17.200L9.400 15.600Z" fill="#ff5a1a" stroke="#e03a00" stroke-width=".6"/></svg>
<!-- stats chevrons -->
<svg style="left:236.500px;top:693px" width="10" height="6"><use href="#chev" width="10" height="6"/></svg>
<svg style="left:236.500px;top:750px" width="10" height="6"><use href="#chev" width="10" height="6"/></svg>
<svg style="left:236.500px;top:769px" width="10" height="6" class="clip770"><use href="#chev" width="10" height="6"/></svg>
<!-- stats scroll arrows -->
<svg class="ov" style="left:1347px;top:494px" width="10" height="8" viewBox="0 0 10 8"><path d="M1 6.400L5 2L9 6.400" fill="none" stroke="#505050" stroke-width="1.800"/></svg>
<svg class="ov" style="left:1347px;top:758px" width="10" height="8" viewBox="0 0 10 8"><path d="M1 1.600L5 6L9 1.600" fill="none" stroke="#505050" stroke-width="1.800"/></svg>
<svg class="ov" style="left:233px;top:775px" width="8" height="9" viewBox="0 0 8 9"><path d="M6.600 .8L2 4.500L6.600 8.200" fill="none" stroke="#505050" stroke-width="1.800"/></svg>
<svg class="ov" style="left:1331px;top:775px" width="8" height="9" viewBox="0 0 8 9"><path d="M1.400 .8L6 4.500L1.400 8.200" fill="none" stroke="#505050" stroke-width="1.800"/></svg>
<!-- status icons -->
<svg style="left:681px;top:796px" width="13" height="18" viewBox="0 0 13 18"><rect x="1.800" y="3.400" width="7.400" height="12.800" rx="1.600" fill="#f4f4f4" stroke="#2a2a2a" stroke-width="1.400"/><path d="M1.800 6H9.200M1.800 13.600H9.200" stroke="#2a2a2a" stroke-width="1"/><path d="M4 5V14M7 5V14" stroke="#c8c8c8" stroke-width=".8"/><path d="M8.400 1.200L11.400 3.200" stroke="#2a2a2a" stroke-width="1"/></svg>
<svg style="left:786px;top:798px" width="14" height="14" viewBox="0 0 14 14"><circle cx="7" cy="7" r="6.600" fill="url(#gBall)" stroke="#8a8a8a" stroke-width=".7"/><path d="M2.600 8C3 5.600 3.800 4.200 4.400 3.800L4.800 7.400L5.800 3L6.800 8L7.600 2.800L8.600 8L9.400 3.200L10 7.400L10.600 4C11.200 5 11.600 6.400 11.600 8C10 4 4 4 2.600 8Z" fill="#fff" opacity=".9"/></svg>
<svg style="left:915px;top:798px" width="14" height="14" viewBox="0 0 14 14"><circle cx="7" cy="7" r="6.300" fill="#16c416" stroke="#12a012" stroke-width=".8"/></svg>
<svg style="left:1096px;top:798px" width="14" height="14" viewBox="0 0 14 14"><circle cx="7" cy="7" r="6.300" fill="#ffc40c" stroke="#e8a400" stroke-width=".8"/></svg>
<svg style="left:1290px;top:797px" width="15" height="16" viewBox="0 0 15 16"><path d="M7.400 .8C10.200 .8 11.200 3 11.400 5.600C11.600 8.400 12.400 9.600 13.800 10.800V11.800H1V10.800C2.400 9.600 3.200 8.400 3.400 5.600C3.600 3 4.600 .8 7.400 .8Z" fill="#ffb41e" stroke="#ee9a0a" stroke-width=".7"/><path d="M5 12.600H9.800C9.600 14 8.600 14.800 7.400 14.800C6.200 14.800 5.200 14 5 12.600Z" fill="#f79a0a"/></svg>
<svg style="left:1355px;top:805px" width="10" height="10" viewBox="0 0 10 10"><g fill="#bdbdbd"><rect x="7" y="1" width="2" height="2"/><rect x="4" y="4" width="2" height="2"/><rect x="7" y="4" width="2" height="2"/><rect x="1" y="7" width="2" height="2"/><rect x="4" y="7" width="2" height="2"/><rect x="7" y="7" width="2" height="2"/></g></svg>
<!-- tree icons -->
<svg style="left:13.5px;top:125.5px" width="16" height="16"><use href="#docs" width="16" height="16"/></svg>
<svg style="left:31.6px;top:144.3px" width="16" height="16"><use href="#dn" width="16" height="16"/></svg>
<svg style="left:31.5px;top:161.8px" width="16" height="16"><use href="#chk" width="16" height="16"/></svg>
<svg style="left:33.6px;top:181px" width="16" height="16"><use href="#lsh" width="16" height="16"/></svg>
<svg style="left:32px;top:198.5px" width="16" height="16"><use href="#updn" width="16" height="16"/></svg>
<svg style="left:12.5px;top:215px" width="18" height="16"><use href="#tag" width="18" height="16"/></svg>
<svg style="left:11.9px;top:234px" width="16" height="16"><use href="#clk" width="16" height="16"/></svg>
<svg style="left:13px;top:253px" width="16" height="16"><use href="#fld" width="16" height="16"/></svg>
<svg style="left:32px;top:270px" width="16" height="16"><use href="#oar" width="16" height="16"/></svg>
<svg style="left:32px;top:288px" width="16" height="16"><use href="#gar" width="16" height="16"/></svg>
<svg style="left:32px;top:306px" width="16" height="16"><use href="#rsd" width="16" height="16"/></svg>
<svg style="left:32px;top:324px" width="16" height="16"><use href="#bolt" width="16" height="16"/></svg>
<svg style="left:30.5px;top:342px" width="16" height="16"><use href="#trk" width="16" height="16"/></svg>
<svg style="left:13px;top:361px" width="16" height="16"><use href="#fld" width="16" height="16"/></svg>
<svg style="left:32px;top:378px" width="16" height="16"><use href="#std" width="16" height="16"/></svg>
<svg style="left:32px;top:396px" width="16" height="16"><use href="#std" width="16" height="16"/></svg>
<svg style="left:32px;top:414px" width="16" height="16"><use href="#std" width="16" height="16"/></svg>
<svg style="left:32px;top:432px" width="16" height="16"><use href="#std" width="16" height="16"/></svg>
<svg style="left:32px;top:450px" width="16" height="16"><use href="#std" width="16" height="16"/></svg>
<svg style="left:32px;top:468px" width="16" height="16"><use href="#std" width="16" height="16"/></svg>


<div id="txt">
<span class="t ttl" style="left:37.5px;top:7.5px;letter-spacing:-0.136px;">Скачать: 0 KB/s, загрузить: 0 KB/s - BitComet 2.04 (Administrator)</span>
<span class="t mn" style="left:15.5px;top:32.5px;letter-spacing:-0.129px;">Файл</span>
<span class="t mn" style="left:58px;top:32.5px;transform:scaleX(0.9209);">Вид</span>
<span class="t mn" style="left:92.5px;top:32.5px;letter-spacing:-0.121px;">CometID</span>
<span class="t mn" style="left:153px;top:32.5px;letter-spacing:0.107px;">Инструменты</span>
<span class="t mn" style="left:242.5px;top:32.5px;transform:scaleX(1.0677);">Помощь</span>
<span class="t" style="left:13.5px;top:79px;transform:scaleX(0.8614);">HTTP</span>
<span class="t" style="left:52.5px;top:79px;letter-spacing:-0.123px;">Torrent</span>
<span class="t" style="left:100px;top:79px;letter-spacing:-0.143px;">Магнитная связь</span>
<span class="t" style="left:212px;top:79px;letter-spacing:-0.036px;">Избранное</span>
<span class="t dis" style="left:291.5px;top:79px;letter-spacing:-0.422px;">Старт</span>
<span class="t dis" style="left:334px;top:79px;letter-spacing:-0.426px;">Стоп</span>
<span class="t dis" style="left:371.5px;top:79px;letter-spacing:0.009px;">Предпросмотр</span>
<span class="t dis" style="left:465.5px;top:79px;letter-spacing:-0.001px;">Открыть папку</span>
<span class="t dis" style="left:558.5px;top:79px;letter-spacing:-0.400px;">Свойства</span>
<span class="t dis" style="left:620px;top:79px;letter-spacing:-0.261px;">Удалить</span>
<span class="t" style="left:683px;top:79px;letter-spacing:-0.092px;">Связать приложение</span>
<span class="t" style="left:809.5px;top:79px;letter-spacing:0.017px;">Настройки</span>
<span class="t" style="left:880px;top:79px;letter-spacing:-0.281px;">Выход</span>
<span class="t" style="left:1140px;top:66px;transform:scaleX(0.9147);">ThePirateBay</span>
<span class="t" style="left:34.5px;top:105px;letter-spacing:-0.172px;">Конференция</span>
<span class="t" style="left:140.3px;top:105px;transform:scaleX(0.7758);">IE</span>
<span class="t" style="left:180.4px;top:105px;transform:scaleX(0.7615);">RSS</span>
<span class="t" style="left:34.5px;top:126px;letter-spacing:-0.222px;">Все загрузки</span>
<span class="t" style="left:53.2px;top:144px;letter-spacing:-0.128px;">Загружается</span>
<span class="t" style="left:53.2px;top:162px;letter-spacing:-0.092px;">Завершено</span>
<span class="t" style="left:53.2px;top:180px;letter-spacing:-0.004px;">Незавершенного</span>
<span class="t" style="left:53.2px;top:198px;letter-spacing:0.035px;">Активный</span>
<span class="t" style="left:34.5px;top:216px;letter-spacing:-0.349px;">Теги задач</span>
<span class="t" style="left:34.5px;top:234px;letter-spacing:-0.063px;">История торрентов</span>
<span class="t" style="left:34.5px;top:252px;letter-spacing:0.000px;">Обмен торрентом</span>
<span class="t" style="left:53.2px;top:270px;letter-spacing:-0.002px;">Общедоступный торрент</span>
<span class="t" style="left:53.2px;top:288px;letter-spacing:-0.039px;">Коллекция торрентов</span>
<span class="t" style="left:53.2px;top:306px;transform:scaleX(0.9200);">RSS Торренты</span>
<span class="t" style="left:53.2px;top:324px;letter-spacing:-0.305px;">ДХТ Торренты (567)</span>
<span class="t" style="left:53.2px;top:342px;letter-spacing:-0.100px;">Трекер Торренты</span>
<span class="t" style="left:34.5px;top:360px;letter-spacing:-0.220px;">Torrent Sites</span>
<span class="t" style="left:53.2px;top:378px;letter-spacing:-0.398px;">The Pirate Bay</span>
<span class="t" style="left:53.2px;top:396px;letter-spacing:-0.034px;">Torrent Room</span>
<span class="t" style="left:53.2px;top:414px;letter-spacing:-0.142px;">Torrent Bar</span>
<span class="t" style="left:53.2px;top:432px;letter-spacing:0.075px;">Demonoid</span>
<span class="t" style="left:53.2px;top:450px;letter-spacing:-0.139px;">SUMO Torrent</span>
<span class="t" style="left:53.2px;top:468px;letter-spacing:-0.297px;">BTMon</span>
<span class="t" style="left:559px;top:102px;letter-spacing:-0.355px;">Теги</span>
<span class="t ph" style="left:630px;top:102px;letter-spacing:-0.103px;">Поиск задач</span>
<span class="t" style="left:231.5px;top:129px;letter-spacing:0.042px;">Имя</span>
<span class="t" style="left:534.3px;top:129px;letter-spacing:-0.229px;">Коммента...</span>
<span class="t" style="left:627px;top:129px;letter-spacing:0.088px;">Снимок</span>
<span class="t" style="left:699.5px;top:129px;letter-spacing:-0.188px;">Предпрос...</span>
<span class="t" style="left:865.6px;top:129px;letter-spacing:-0.358px;">Размер</span>
<span class="t" style="left:964px;top:129px;letter-spacing:0.100px;">Прогресс</span>
<span class="t" style="left:1058.6px;top:129px;letter-spacing:-0.286px;">Скор. за...</span>
<span class="t" style="left:1156px;top:129px;letter-spacing:-0.231px;">Скор. ...</span>
<span class="t" style="left:1267px;top:129px;letter-spacing:-0.299px;">Остав. время</span>
<span class="t" style="left:253.3px;top:468.5px;letter-spacing:-0.134px;">Начальная страница</span>
<span class="t" style="left:401.5px;top:468.5px;letter-spacing:-0.317px;">График</span>
<span class="t" style="left:476.8px;top:467px;letter-spacing:-0.343px;">Статистика</span>
<span class="t" style="left:235.4px;top:494px;letter-spacing:0.092px;">Пункт</span>
<span class="t" style="left:598px;top:494px;letter-spacing:-0.090px;">Значение</span>
<span class="t st" style="left:251.2px;top:515.5px;letter-spacing:-0.184px;">Версия:</span>
<span class="t st" style="left:598px;top:515.5px;letter-spacing:-0.338px;">BitComet 2.04 Stable Release</span>
<span class="t st" style="left:251.2px;top:534.5px;letter-spacing:-0.400px;">Работает:</span>
<span class="t st" style="left:598px;top:534.5px;transform:scaleX(0.9064);">0:03:10</span>
<span class="t st" style="left:251.2px;top:553.5px;letter-spacing:-0.129px;">Общие задачи:</span>
<span class="t st" style="left:598px;top:553.5px;letter-spacing:-0.073px;">Всего: 0 / Запущено: 0</span>
<span class="t st" style="left:251.2px;top:572.5px;letter-spacing:-0.060px;">Долгосрочная раздача:</span>
<span class="t st" style="left:598px;top:572.5px;letter-spacing:0.000px;">0 Файлы, готовые к посевной</span>
<span class="t st" style="left:251.2px;top:591.5px;letter-spacing:-0.164px;">Метаданные Загрузка:</span>
<span class="t st" style="left:598px;top:591.5px;letter-spacing:0.251px;">Ничего</span>
<span class="t st" style="left:251.2px;top:610.5px;letter-spacing:-0.066px;">Файлы кэша метаданных:</span>
<span class="t st" style="left:598px;top:610.5px;">0</span>
<span class="t st" style="left:251.2px;top:629.5px;letter-spacing:0.122px;">Черный список торрент-бирж:</span>
<span class="t st" style="left:598px;top:629.5px;">0</span>
<span class="t st" style="left:251.2px;top:648.5px;letter-spacing:-0.238px;">Удаленная загрузка:</span>
<span class="t st" style="left:598px;top:648.5px;letter-spacing:-0.042px;">Запрешено</span>
<span class="t st" style="left:251.2px;top:686.5px;letter-spacing:-0.388px;">TCP соединения:</span>
<span class="t st" style="left:598px;top:686.5px;letter-spacing:0.016px;">Установлено: 0 [MAX:Неограничено] / Полу-Открытых: 0 [MAX:200] / в ожидании: 0</span>
<span class="t st" style="left:251.2px;top:705.5px;letter-spacing:-0.173px;">Локальный IP адрес:</span>
<span class="t st" style="left:598px;top:705.5px;transform:scaleX(0.8947);">192.168.1.64</span>
<span class="t st" style="left:251.2px;top:724.5px;letter-spacing:-0.252px;">WAN IP:</span>
<span class="t st" style="left:598px;top:724.5px;transform:scaleX(0.8879);">84.53.216.2</span>
<span class="t st" style="left:251.2px;top:743.5px;letter-spacing:-0.137px;">Порт прослушивания TCP:</span>
<span class="t st" style="left:598px;top:743.5px;letter-spacing:-0.016px;">9989 (Блокировано файерволом/роутером)</span>
<span class="t st" style="left:251.2px;top:762.5px;letter-spacing:-0.073px;">Порт прослушивания UDP:</span>
<span class="t st" style="left:598px;top:762.5px;letter-spacing:0.236px;">9989 (Открыт файервол/роутером)</span>
<span class="t" style="left:704.5px;top:798px;letter-spacing:-0.284px;">Не в сети</span>
<span class="t" style="left:811px;top:798px;letter-spacing:0.014px;">Вы не вошли</span>
<span class="t" style="left:940.5px;top:798px;letter-spacing:-0.200px;">DHT подключена: 1413</span>
<span class="t" style="left:1121.3px;top:798px;letter-spacing:-0.112px;">Порт заблокирован: 9989</span>
<span class="t" style="left:1316px;top:798px;">4</span>
<span class="t lnk" style="left:45.4px;top:635px;letter-spacing:-0.476px;">LOGIN</span>
<span class="t lnk" style="left:121.2px;top:635px;transform:scaleX(0.8494);">REGISTER</span>
<span class="t lg" style="left:19.9px;top:690.5px;letter-spacing:-0.072px;">Logged in users can download</span>
<span class="t lg" style="left:95px;top:710.5px;letter-spacing:-0.077px;">faster.</span>
</div>
</body></html>
